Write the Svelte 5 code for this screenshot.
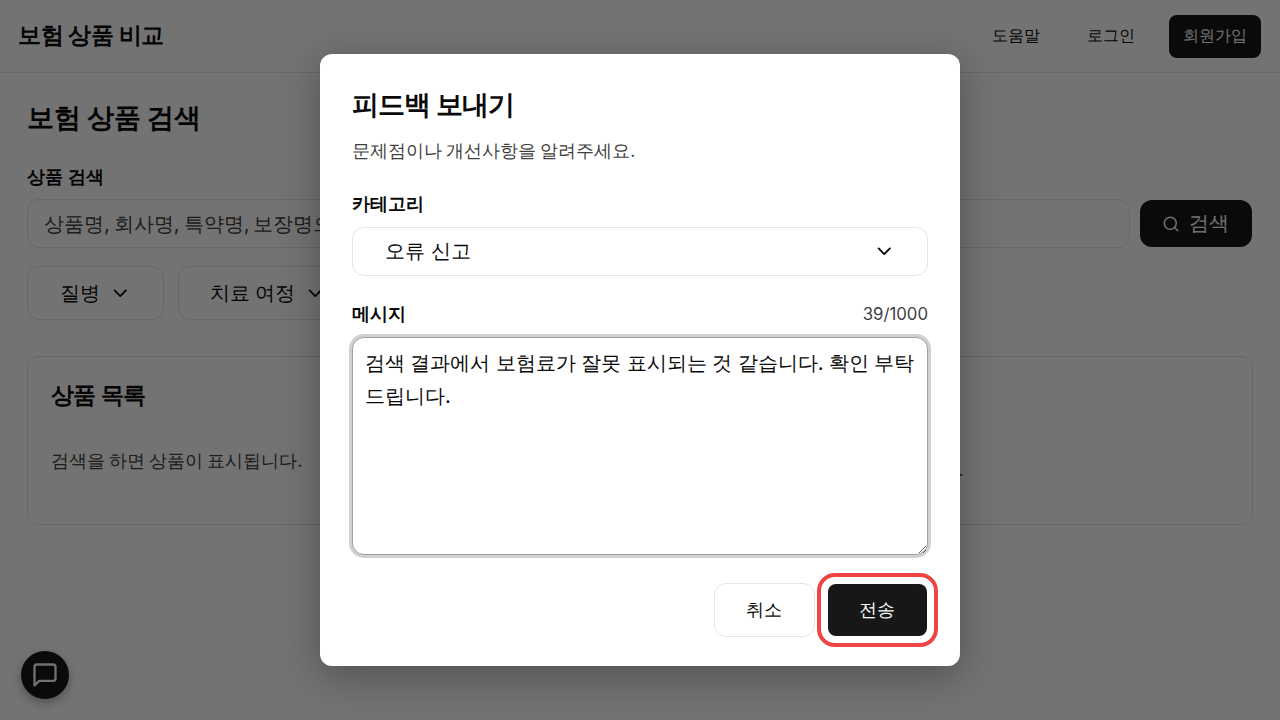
<script lang="ts">
    const maxLength = 1000;
    const filters = ["질병", "치료 여정"];

    let query = $state("");
    let category = $state("오류 신고");
    let message = $state(
        "검색 결과에서 보험료가 잘못 표시되는 것 같습니다. 확인 부탁드립니다.",
    );
    let used = $state(39);
</script>

{#snippet chevron()}
    <svg class="chevron" viewBox="0 0 24 24">
        <path d="m6 9 6 6 6-6" />
    </svg>
{/snippet}

<div class="page">
    <header>
        <strong class="brand">보험 상품 비교</strong>
        <nav>
            <a href="#help">도움말</a>
            <a href="#login">로그인</a>
            <a class="signup" href="#signup">회원가입</a>
        </nav>
    </header>

    <main>
        <h1>보험 상품 검색</h1>
        <label class="search-label" for="query">상품 검색</label>
        <div class="search-row">
            <input
                id="query"
                bind:value={query}
                placeholder="상품명, 회사명, 특약명, 보장명으로 검색하세요"
            />
            <button class="search">
                <svg viewBox="0 0 24 24">
                    <circle cx="11" cy="11" r="8" />
                    <path d="m21 21-4.3-4.3" />
                </svg>
                검색
            </button>
        </div>
        <div class="filters">
            {#each filters as filter}
                <button>{filter}{@render chevron()}</button>
            {/each}
        </div>
        <section class="results">
            <div>
                <h2>상품 목록</h2>
                <p>검색을 하면 상품이 표시됩니다.</p>
            </div>
            <p class="hint">상품을 선택하면 상세가 표시됩니다.</p>
        </section>
    </main>

    <button class="chat" aria-label="피드백">
        <svg viewBox="0 0 24 24">
            <path
                d="M21 15a2 2 0 0 1-2 2H7l-4 4V5a2 2 0 0 1 2-2h14a2 2 0 0 1 2 2z"
            />
        </svg>
    </button>

    <div class="overlay">
        <div class="dialog" role="dialog" aria-modal="true">
            <h2>피드백 보내기</h2>
            <p class="description">문제점이나 개선사항을 알려주세요.</p>

            <span class="field-label">카테고리</span>
            <button class="select">{category}{@render chevron()}</button>

            <div class="message-head">
                <label class="field-label" for="message">메시지</label>
                <span class="count">{used}/{maxLength}</span>
            </div>
            <textarea
                id="message"
                bind:value={message}
                oninput={() => (used = message.length)}
                maxlength={maxLength}
            ></textarea>

            <div class="actions">
                <button class="cancel">취소</button>
                <div class="highlight">
                    <button class="send" disabled={used === 0}>전송</button>
                </div>
            </div>
        </div>
    </div>
</div>

<style>
    :global(body) {
        font-family: Inter, sans-serif;
        color: #0a0a0a;
        background: #fff;
    }

    * {
        box-sizing: border-box;
    }

    h1,
    h2,
    p {
        margin: 0;
    }

    button,
    input,
    textarea {
        font: inherit;
        color: inherit;
        background: #fff;
        border: 1px solid #e5e5e5;
        border-radius: 12px;
    }

    button {
        display: flex;
        align-items: center;
        justify-content: center;
        padding: 0;
    }

    svg {
        width: 18px;
        height: 18px;
        fill: none;
        stroke: currentColor;
        stroke-width: 2;
        stroke-linecap: round;
        stroke-linejoin: round;
        flex-shrink: 0;
    }

    .chevron {
        width: 22.5px;
        height: 22.5px;
    }

    .page {
        position: relative;
        height: 720px;
        font-size: 18px;
    }

    header {
        display: flex;
        align-items: center;
        justify-content: space-between;
        height: 73px;
        padding: 0 19px 0 18px;
        border-bottom: 1px solid #e5e5e5;
    }

    .brand {
        padding-bottom: 2px;
        font-size: 22.5px;
        font-weight: 600;
        letter-spacing: -0.45px;
    }

    nav {
        display: flex;
        align-items: center;
        font-size: 16px;
    }

    nav a {
        color: inherit;
        text-decoration: none;
        margin-right: 47px;
    }

    nav a:nth-child(2) {
        margin-right: 34px;
    }

    nav .signup {
        margin: 0;
        padding: 0 14px 2px;
        line-height: 41px;
        border-radius: 8px;
        color: #fafafa;
        background: #171717;
    }

    main {
        padding: 27px 27px 0;
    }

    h1 {
        font-size: 27px;
        font-weight: 600;
        line-height: 36px;
        letter-spacing: -0.3px;
    }

    .search-label {
        display: block;
        margin-top: 27px;
        font-weight: 600;
        line-height: 27px;
    }

    .search-row {
        display: flex;
        align-items: center;
        gap: 10px;
        margin-top: 9px;
    }

    input {
        flex: 1;
        height: 49px;
        padding: 0 16px;
        font-size: 20.25px;
        word-spacing: -1.7px;
    }

    input::placeholder {
        color: #404040;
        opacity: 1;
    }

    .search {
        gap: 9px;
        width: 112px;
        height: 47px;
        margin-right: 1px;
        padding-right: 2px;
        border: 0;
        font-size: 20.25px;
        color: #fafafa;
        background: #171717;
    }

    .filters {
        display: flex;
        gap: 14px;
        margin-top: 18px;
    }

    .filters button {
        gap: 9px;
        height: 54px;
        padding: 0 31px 0 32px;
        font-size: 20.25px;
    }

    .filters button + button {
        padding-left: 31px;
    }

    .results {
        display: flex;
        height: 169px;
        margin-top: 36px;
        padding: 22px 23px;
        border: 1px solid #e5e5e5;
        border-radius: 12px;
    }

    .results > div {
        width: 625px;
    }

    .results h2 {
        font-size: 22.5px;
        font-weight: 600;
        line-height: 32px;
        letter-spacing: -0.6px;
    }

    .results p {
        margin-top: 36px;
        line-height: 28px;
        color: #404040;
        word-spacing: -1px;
    }

    .results .hint {
        margin-top: 77px;
    }

    .chat {
        position: absolute;
        left: 21px;
        bottom: 21px;
        width: 48px;
        height: 48px;
        border: 0;
        border-radius: 50%;
        color: #fafafa;
        background: #171717;
        box-shadow: 0 4px 10px rgb(0 0 0 / 30%);
    }

    .chat svg {
        width: 28px;
        height: 28px;
    }

    .overlay {
        position: absolute;
        inset: 0;
        display: flex;
        align-items: center;
        justify-content: center;
        overflow: hidden;
        background: rgb(0 0 0 / 55%);
    }

    .dialog {
        width: 640px;
        height: 612px;
        padding: 32px;
        border-radius: 12px;
        font-size: 18px;
        background: #fff;
        box-shadow: 0 10px 40px rgb(0 0 0 / 30%);
    }

    .dialog h2 {
        font-size: 27px;
        font-weight: 600;
        line-height: 38px;
        letter-spacing: -1px;
    }

    .description {
        margin-top: 13px;
        line-height: 28px;
        color: #404040;
        word-spacing: -1px;
    }

    .field-label {
        display: block;
        font-weight: 600;
        line-height: 28px;
    }

    span.field-label {
        margin-top: 25px;
    }

    .select {
        justify-content: space-between;
        width: 100%;
        height: 49px;
        margin-top: 9px;
        padding: 0 32px;
        font-size: 20.25px;
    }

    .message-head {
        display: flex;
        align-items: center;
        justify-content: space-between;
        margin-top: 24px;
    }

    .count {
        padding-bottom: 1px;
        font-size: 16.75px;
        color: #404040;
    }

    textarea {
        display: block;
        width: 100%;
        height: 218px;
        margin-top: 9px;
        padding: 8px 8px 8px 12px;
        border-color: #a1a1a1;
        outline: 0;
        font-size: 20.25px;
        line-height: 33px;
        word-spacing: -0.25px;
        box-shadow: 0 0 0 3px #d0d0d0;
        resize: vertical;
    }

    .actions {
        display: flex;
        align-items: center;
        justify-content: flex-end;
        gap: 2px;
        margin: 18px -10px 0 0;
    }

    .cancel {
        width: 101px;
        height: 54px;
        padding-right: 1px;
    }

    /* ring around the primary action */
    .highlight {
        padding: 7px;
        border: 4px solid #ef4444;
        border-radius: 18px;
    }

    .send {
        width: 99px;
        height: 52px;
        padding-right: 1px;
        border: 0;
        border-radius: 8px;
        color: #fafafa;
        background: #171717;
    }
</style>
